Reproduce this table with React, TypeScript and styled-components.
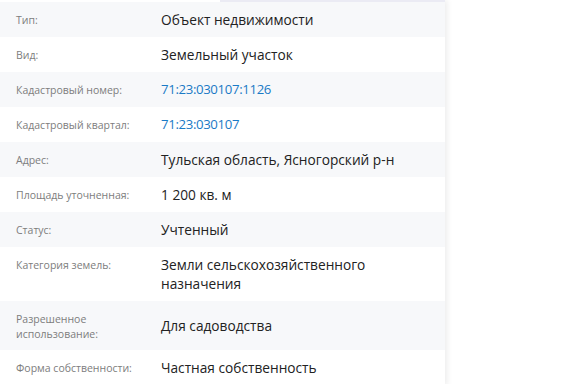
import styled, { createGlobalStyle } from "styled-components";

const GlobalStyle = createGlobalStyle`
  html, body {
    margin: 0;
    padding: 0;
    background: #fff;
    overflow: hidden;
  }
  body {
    font-family: "Open Sans", "Noto Sans", sans-serif;
  }
`;

const Panel = styled.section`
  width: 445px;
  background: #fff;
  box-shadow: 2px 0 6px rgba(0, 0, 0, 0.08);
`;

const TopStrip = styled.div`
  display: flex;
  height: 2px;
`;

const StripPart = styled.div<{ $tint?: boolean }>`
  flex: ${(p) => (p.$tint ? 1 : "0 0 220px")};
  background: ${(p) => (p.$tint ? "#ebebf4" : "#fff")};
`;

const Row = styled.div<{ $shaded: boolean; $last?: boolean }>`
  display: grid;
  grid-template-columns: 145px 1fr;
  padding: 8px 16px;
  min-height: 19px;
  background: ${(p) => (p.$shaded ? "#f7f8fa" : "#fff")};
  border-bottom: ${(p) => (p.$last ? "1px solid #eceef1" : "none")};
`;

const Label = styled.div`
  align-self: start;
  padding: 2.5px 8px 0 0;
  font-size: 10.5px;
  line-height: 15.3px;
  color: #7d7d7d;
`;

const Value = styled.div<{ $link?: boolean }>`
  align-self: center;
  font-size: ${(p) => (p.$link ? "13.2px" : "13.7px")};
  letter-spacing: ${(p) => (p.$link ? "-0.35px" : "0")};
  line-height: 19px;
  color: ${(p) => (p.$link ? "#1a7ac6" : "#222")};
`;

type Item = { label: string; value: string; link?: boolean };

const items: Item[] = [
  { label: "Тип:", value: "Объект недвижимости" },
  { label: "Вид:", value: "Земельный участок" },
  { label: "Кадастровый номер:", value: "71:23:030107:1126", link: true },
  { label: "Кадастровый квартал:", value: "71:23:030107", link: true },
  { label: "Адрес:", value: "Тульская область, Ясногорский р-н" },
  { label: "Площадь уточненная:", value: "1 200 кв. м" },
  { label: "Статус:", value: "Учтенный" },
  { label: "Категория земель:", value: "Земли сельскохозяйственного назначения" },
  { label: "Разрешенное использование:", value: "Для садоводства" },
  { label: "Форма собственности:", value: "Частная собственность" },
];

const App = () => {
  return (
    <>
      <GlobalStyle />
      <Panel>
        <TopStrip>
          <StripPart />
          <StripPart $tint />
        </TopStrip>
        {items.map((it, i) => (
          <Row key={it.label} $shaded={i % 2 === 0} $last={i === items.length - 1}>
            <Label>{it.label}</Label>
            <Value $link={it.link}>{it.value}</Value>
          </Row>
        ))}
      </Panel>
    </>
  );
};

export default App;
